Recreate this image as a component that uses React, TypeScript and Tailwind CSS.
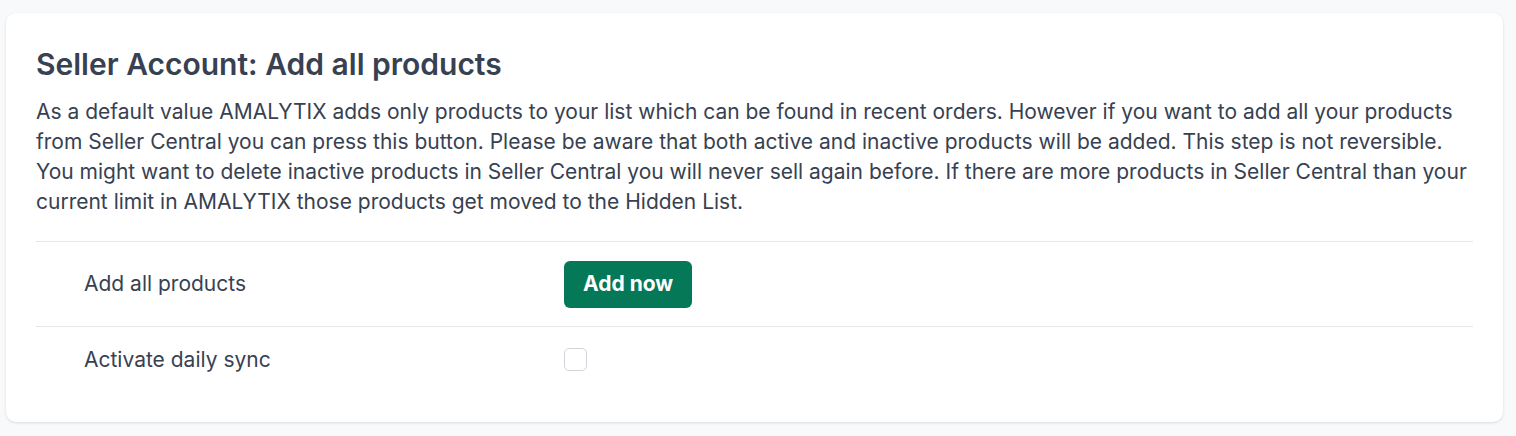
import React from 'react'

const App: React.FC = () => {
  return (
    <div className="min-h-screen bg-[#f8f9fb] pt-[13px] pl-[6px] pr-[13px] font-['Inter',sans-serif] text-[#374151]">
      <div className="rounded-[10px] bg-white px-[30px] pt-[33px] pb-[30px] shadow-[0_1px_3px_rgba(0,0,0,0.12)]">
        <h2 className="text-[30px] font-semibold leading-[36px] text-[#374151]">
          Seller Account: Add all products
        </h2>
        <p className="mt-[15px] text-[21px] leading-[30px] text-[#374151]">
          As a default value AMALYTIX adds only products to your list which can be found in recent orders. However if you want to add all your products
          from Seller Central you can press this button. Please be aware that both active and inactive products will be added. This step is not reversible.
          You might want to delete inactive products in Seller Central you will never sell again before. If there are more products in Seller Central than your
          current limit in AMALYTIX those products get moved to the Hidden List.
        </p>

        <div className="mt-[24px] border-t border-[#e5e7eb]">
          <div className="flex h-[84px] items-center pl-[48px]">
            <span className="w-[480px] text-[21px]">Add all products</span>
            <button className="h-[47px] rounded-[6px] bg-[#047857] px-[19px] text-[21px] font-bold text-white">
              Add now
            </button>
          </div>
          <div className="flex h-[66px] items-center border-t border-[#e5e7eb] pl-[48px]">
            <span className="w-[480px] text-[21px]">Activate daily sync</span>
            <span className="h-[23px] w-[23px] rounded-[5px] border border-[#d1d5db] bg-white" />
          </div>
        </div>
      </div>
    </div>
  )
}

export default App
